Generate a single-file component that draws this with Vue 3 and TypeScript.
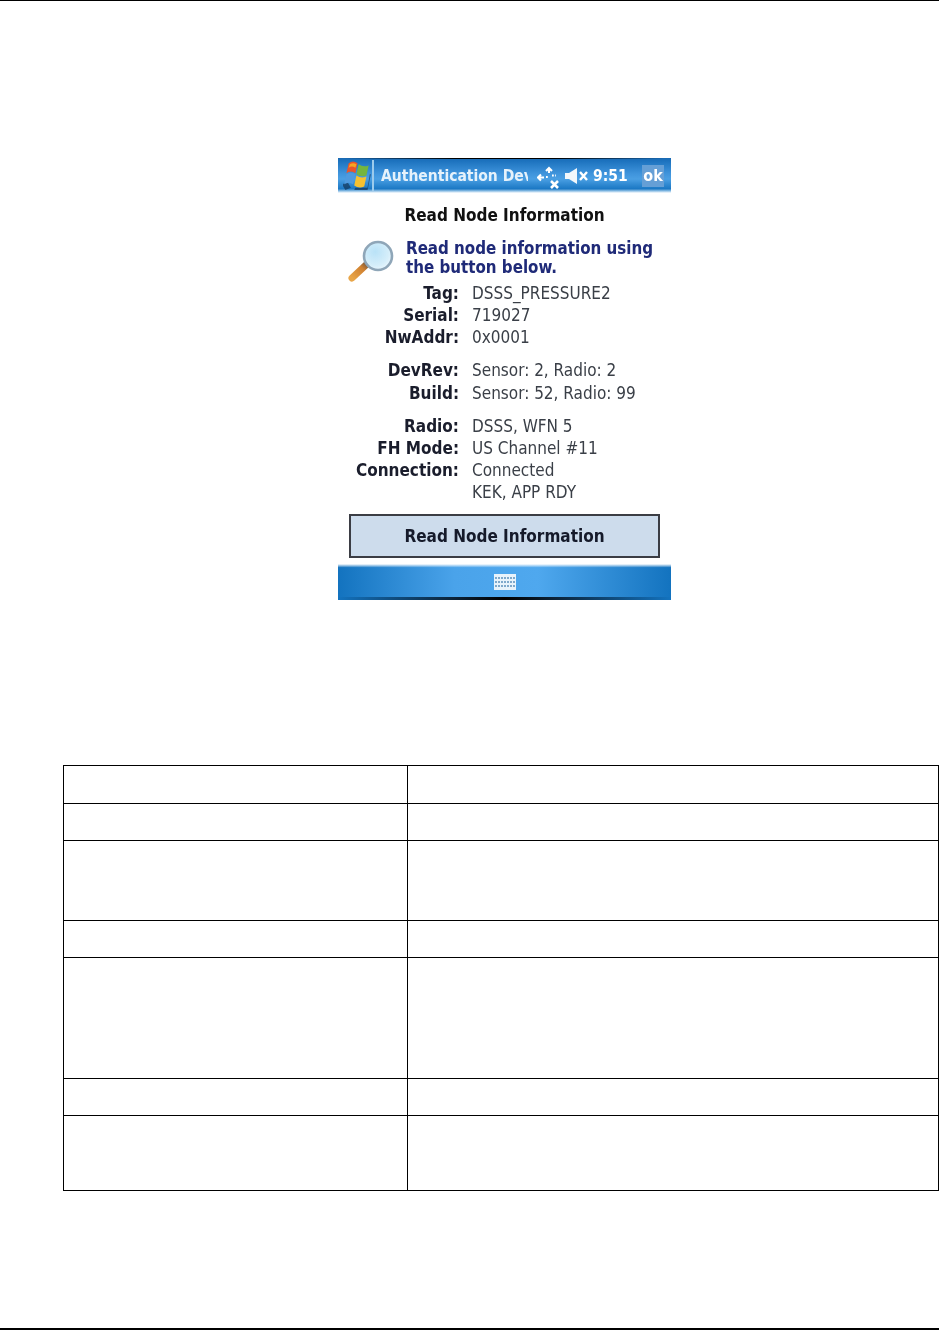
<script setup lang="ts">
interface Row { label: string; value: string; gap?: boolean }
const rows: Row[] = [
  { label: 'Tag:', value: 'DSSS_PRESSURE2' },
  { label: 'Serial:', value: '719027' },
  { label: 'NwAddr:', value: '0x0001' },
  { label: 'DevRev:', value: 'Sensor: 2, Radio: 2', gap: true },
  { label: 'Build:', value: 'Sensor: 52, Radio: 99' },
  { label: 'Radio:', value: 'DSSS, WFN 5', gap: true },
  { label: 'FH Mode:', value: 'US Channel #11' },
  { label: 'Connection:', value: 'Connected' },
  { label: '', value: 'KEK, APP RDY' },
]
const tableRows: number[] = [38, 37, 80, 37, 121, 37, 75]
</script>

<template>
  <div class="page">
    <div class="device">
      <div class="taskbar">
        <svg class="flag" width="28" height="30" viewBox="2 3 25 27">
          <path d="M1 24 L6 22 L9 27 L4 29 Z M13 27 L24 27 L26 15 L27 15 L24 29 L12 29 Z" fill="#12304f" opacity="0.65" />
          <path d="M7 5 Q11 2 15 5 L13 14 Q9 11 5 14 Z" fill="#e9552b" />
          <path d="M8 6 Q11 4 14 6 L13 9 Q10 7 7 9 Z" fill="#f5a623" />
          <path d="M16 6 Q20 9 25 7 L23 16 Q18 18 14 15 Z" fill="#74b53e" />
          <path d="M5 15 Q9 12 13 15 L11 24 Q7 21 3 24 Z" fill="#4f9ade" />
          <path d="M14 16 Q18 19 23 17 L21 26 Q16 28 12 25 Z" fill="#f6c12f" />
        </svg>
        <div class="divider"></div>
        <div class="title">Authentication Dev</div>
        <svg class="net" width="24" height="24" viewBox="0 0 24 24" fill="none" stroke="#fff" stroke-width="2.1">
          <path d="M12 7V2M9 5l3-3 3 3" />
          <path d="M1 11.5h6M4 8.5l-3 3 3 3" />
          <path d="M9 11h2.5M15 9.5h4" stroke-dasharray="1.8 1.4" />
          <path d="M14 15l7 7M21 15l-7 7" stroke-width="2.6" />
        </svg>
        <svg class="vol" width="24" height="16" viewBox="0 0 24 16">
          <path d="M0 5h4l8-5v16l-8-5H0z" fill="#f2f7fb" />
          <path d="M15 4l7 8M22 4l-7 8" stroke="#fff" stroke-width="2.4" />
        </svg>
        <div class="clock">9:51</div>
        <div class="ok">ok</div>
      </div>
      <div class="body">
        <div class="heading">Read Node Information</div>
        <div class="intro">
          <svg class="lens" width="48" height="44" viewBox="0 0 48 44">
            <defs>
              <radialGradient id="glass" cx="0.4" cy="0.35" r="0.8">
                <stop offset="0" stop-color="#b9e2f7" />
                <stop offset="0.6" stop-color="#d5eefa" />
                <stop offset="1" stop-color="#f5fbff" />
              </radialGradient>
              <linearGradient id="handle" x1="0" y1="1" x2="1" y2="0">
                <stop offset="0" stop-color="#e8a548" />
                <stop offset="0.7" stop-color="#cf8030" />
                <stop offset="1" stop-color="#7c5a3c" />
              </linearGradient>
            </defs>
            <path d="M5 39 L20 25" stroke="url(#handle)" stroke-width="7" stroke-linecap="round" />
            <circle cx="31" cy="17" r="14" fill="url(#glass)" stroke="#8fa6b8" stroke-width="2.6" />
          </svg>
          <div class="intro-text">Read node information using<br />the button below.</div>
        </div>
        <div class="rows">
          <div v-for="r in rows" :key="r.value" class="row" :class="{ gap: r.gap }">
            <div class="label">{{ r.label }}</div>
            <div class="value">{{ r.value }}</div>
          </div>
        </div>
        <div class="button">Read Node Information</div>
      </div>
      <div class="bottombar">
        <div class="keyboard">
          <span v-for="n in 21" :key="n"></span>
        </div>
      </div>
    </div>
    <div class="grid">
      <div v-for="(h, i) in tableRows" :key="i" class="grid-row" :style="{ height: h + 'px' }">
        <div class="cell-a"></div>
        <div class="cell-b"></div>
      </div>
    </div>
  </div>
</template>

<style>
html, body { margin: 0; background: #fff; }
</style>

<style scoped>
.page {
  width: 939px;
  height: 1330px;
  box-sizing: border-box;
  border-top: 1px solid #000;
  border-bottom: 2px solid #000;
  background: #fff;
  display: flex;
  flex-direction: column;
  font-family: "DejaVu Sans", sans-serif;
  font-stretch: condensed;
}
.device {
  width: 333px;
  height: 442px;
  margin: 157px 0 0 338px;
  display: flex;
  flex-direction: column;
  flex: none;
}
.taskbar {
  height: 35px;
  flex: none;
  display: flex;
  align-items: center;
  background:
    linear-gradient(90deg, rgba(0,0,0,0) 2%, #000 35%, #000 65%, rgba(0,0,0,0) 98%) top / 100% 1px no-repeat,
    linear-gradient(180deg, #1a6ab3 0%, #1c72be 8%, #3f94dc 45%, #4a9fe3 60%, #1b78c4 88%, #9cc8e9 95%, #fff 100%);
  color: #fff;
  font-weight: 700;
  filter: blur(0.4px);
}
.flag { margin-left: 5px; flex: none; }
.divider { width: 2px; height: 31px; background: #9ccbec; margin-left: 1px; flex: none; }
.title {
  width: 147px;
  margin-left: 7px;
  font-size: 15.5px;
  white-space: nowrap;
  overflow: hidden;
  flex: none;
  color: #e6f2fb;
}
.net { flex: none; margin-left: 9px; margin-top: 5px; }
.vol { flex: none; margin-left: 4px; margin-top: 1px; }
.clock { font-size: 15.5px; margin-left: 4px; width: 49px; flex: none; }
.ok {
  width: 22px;
  height: 22px;
  background: #659fd6;
  font-size: 16px;
  line-height: 22px;
  text-align: center;
  flex: none;
}
.body {
  flex: 1;
  display: flex;
  flex-direction: column;
  filter: blur(0.35px);
}
.heading {
  margin-top: 11px;
  height: 22px;
  line-height: 22px;
  text-align: center;
  font-size: 17px;
  font-weight: 700;
  color: #111;
}
.intro { display: flex; margin-top: 11px; height: 45px; }
.lens { margin: 2px 0 0 9px; flex: none; }
.intro-text {
  margin-left: 11px;
  padding-top: 2px;
  font-size: 16.8px;
  line-height: 19px;
  font-weight: 700;
  color: #1f2a78;
  white-space: nowrap;
}
.rows { display: flex; flex-direction: column; font-size: 17px; }
.row { display: flex; height: 22.15px; line-height: 22px; }
.row.gap { margin-top: 11px; }
.label { width: 121px; text-align: right; font-weight: 700; color: #1a1d2c; flex: none; white-space: nowrap; }
.value { margin-left: 13px; color: #3a3f47; white-space: nowrap; }
.button {
  margin: 11px 11px 0 11px;
  height: 44px;
  box-sizing: border-box;
  border: 2px solid #3b3d44;
  background: #cddcec;
  text-align: center;
  line-height: 40px;
  font-size: 17px;
  font-weight: 700;
  color: #151a2a;
}
.bottombar {
  height: 36px;
  flex: none;
  display: flex;
  justify-content: center;
  align-items: center;
  position: relative;
  background:
    linear-gradient(180deg, #fff 0%, rgba(255,255,255,0) 10%),
    linear-gradient(90deg, #1373bf 0%, #4aa3ea 35%, #4fa8ee 60%, #1373bf 100%);
}
.bottombar::after {
  content: "";
  position: absolute;
  left: 0;
  right: 0;
  bottom: 0;
  height: 3px;
  background: linear-gradient(90deg, #1373bf 0%, #0c2338 35%, #000 50%, #0c2338 65%, #1373bf 100%);
}
.keyboard {
  width: 22px;
  height: 16px;
  background: #e8f3fb;
  display: grid;
  grid-template-columns: repeat(7, 2px);
  grid-auto-rows: 2px;
  column-gap: 1px;
  row-gap: 2px;
  padding: 3px 1px;
  box-sizing: border-box;
  justify-content: center;
  filter: blur(0.4px);
}
.keyboard span { background: #7fa9cb; }
.grid {
  margin: 165px 0 0 63px;
  width: 876px;
  box-sizing: border-box;
  border-top: 1px solid #000;
  border-left: 1px solid #000;
  flex: none;
}
.grid-row { display: flex; box-sizing: border-box; border-bottom: 1px solid #000; }
.cell-a { width: 343px; border-right: 1px solid #000; flex: none; }
.cell-b { flex: 1; border-right: 1px solid #000; }
</style>
